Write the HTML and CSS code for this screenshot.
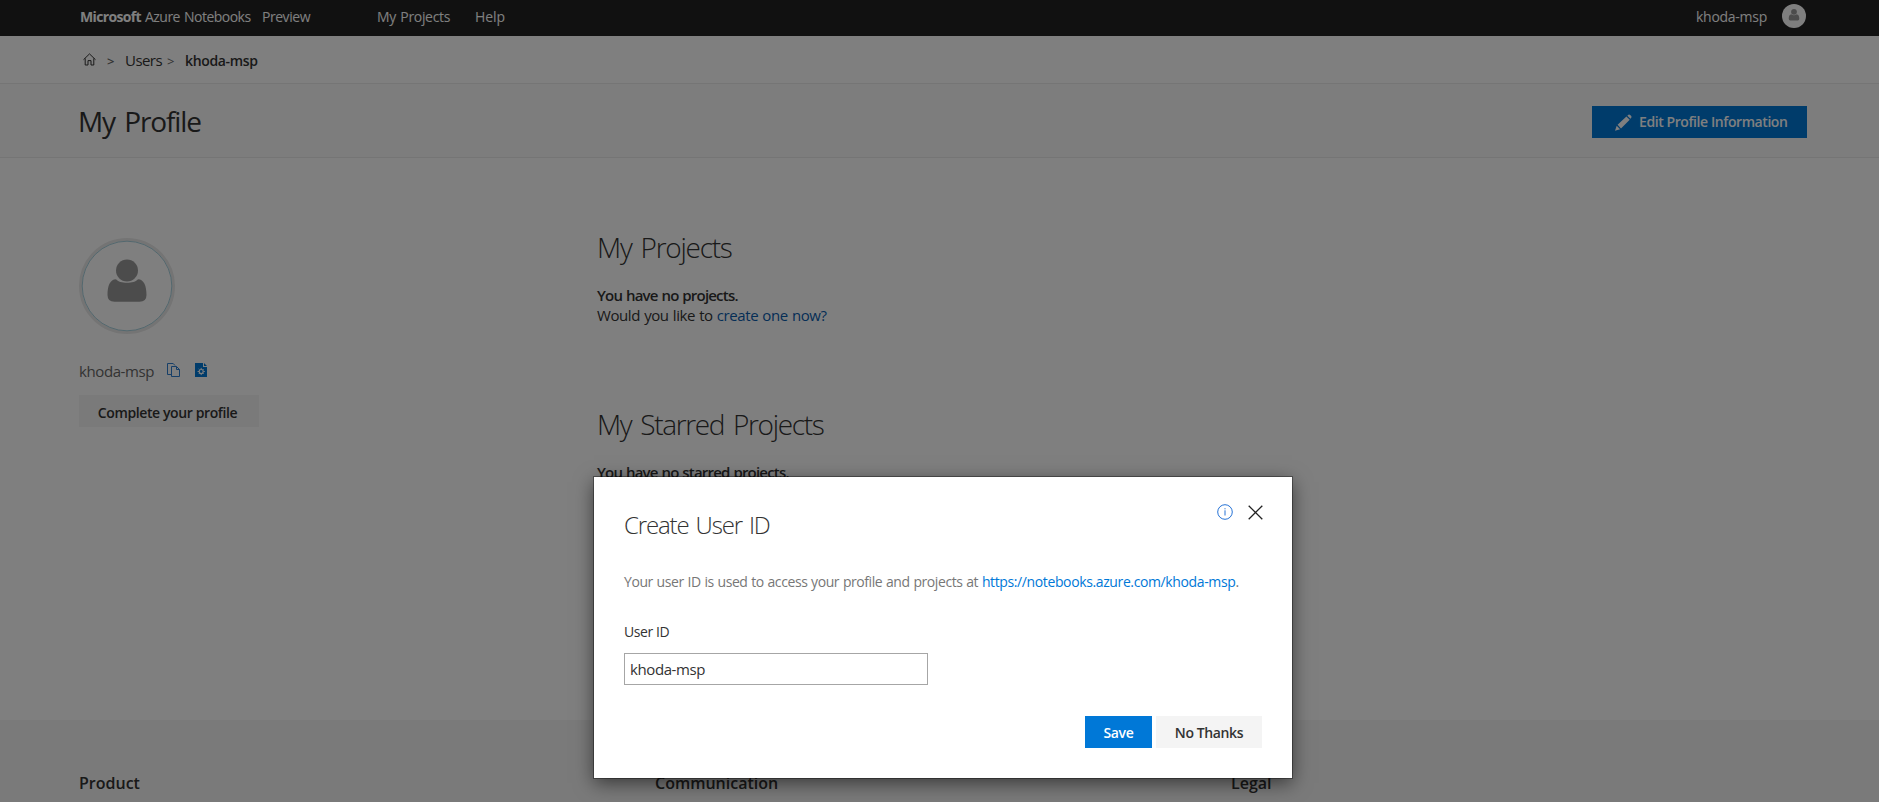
FILE: index.html
```html
<!DOCTYPE html>
<html lang="en">
<head>
<meta charset="utf-8">
<title>My Profile - Azure Notebooks</title>
<link rel="stylesheet" href="styles.css">
</head>
<body>
<div class="page">
  <nav class="topbar">
    <div class="brand"><b>Microsoft</b><span class="product">Azure Notebooks</span><span class="preview">Preview</span></div>
    <a class="nav-projects">My Projects</a>
    <a class="nav-help">Help</a>
    <span class="nav-user">khoda-msp</span>
    <svg class="nav-avatar" viewBox="0 0 24 24"><circle cx="12" cy="12" r="12" fill="#fff"/><circle cx="12" cy="7.8" r="2.9" fill="#999"/><path d="M9.3 10.2Q12 12.2 14.7 10.2Q17.3 10.6 17.3 14.8Q17.3 16.4 15.8 16.4H8.2Q6.7 16.4 6.7 14.8Q6.7 10.6 9.3 10.2Z" fill="#999"/></svg>
  </nav>
  <div class="crumbs">
    <svg class="home" viewBox="0 0 13 13" fill="none" stroke="#333"><path d="M.5 6.7L6.5.9L12.5 6.7M2.2 5.4V12H5V7.6H8V12H10.8V5.4"/></svg>
    <span class="sep first">&gt;</span>
    <a class="users">Users</a>
    <span class="sep second">&gt;</span>
    <b class="current">khoda-msp</b>
  </div>
  <header class="title-band">
    <h1>My Profile</h1>
    <button class="btn edit">
      <svg viewBox="0 0 17 17" fill="#fff"><path d="M0 16.7L1.7 11.8L5.1 15.2ZM2.6 10.7L11.4 2.5L14.7 5.7L6 14.4ZM12.3 1.7L13.4.7Q14.3 0 15.2.9L16.2 1.9Q17 2.8 16.2 3.8L15.5 4.8Z"/></svg>
      <span>Edit Profile Information</span>
    </button>
  </header>
  <main class="content">
    <aside class="profile">
      <svg class="avatar" viewBox="0 0 96 96"><circle cx="48" cy="48" r="46.5" fill="none" stroke="#e9e9e9" stroke-width="3"/><circle cx="48" cy="48" r="44.8" fill="none" stroke="#8fc4d4" stroke-width=".8"/><circle cx="48" cy="32.5" r="11" fill="#999"/><path d="M37 41.3C40.5 46 55.5 46 59 41.3C65 41.5 67.5 48 67.5 57Q67.5 63.8 60.5 63.8H35.5Q28.5 63.8 28.5 57C28.5 48 31 41.5 37 41.3Z" fill="#999"/></svg>
      <div class="identity">
        <span class="user-name">khoda-msp</span>
        <svg class="copy" viewBox="0 0 13 14" fill="none" stroke="#2f7fd0"><path d="M4 11.5H.5V.5H6.2L8 2.500M4.500 13.500V3.500H9.500L12.500 6.500V13.500ZM9.500 3.500V6.500H12.500"/></svg>
        <svg class="filecfg" viewBox="0 0 12 14"><path d="M0 0H8V4H12V14H0ZM9 0L12 3H9Z" fill="#0078d7"/><circle cx="6.2" cy="8.5" r="2" fill="none" stroke="#fff" stroke-width="1.100"/><path d="M6.2 4.9V6.3M6.2 10.7V12.1M2.6 8.500H4M8.400 8.500H9.800M3.700 6L4.600 6.900M7.800 10.100L8.700 11M3.700 11L4.600 10.100M7.800 6.900L8.700 6" stroke="#fff"/></svg>
      </div>
      <button class="btn light complete">Complete your profile</button>
    </aside>
    <section class="lists">
      <h2>My Projects</h2>
      <p class="empty">You have no projects.</p>
      <p class="hint">Would you like to <a>create one now?</a></p>
      <h2 class="starred">My Starred Projects</h2>
      <p class="empty">You have no starred projects.</p>
    </section>
  </main>
  <footer class="footer"><b>Product</b><b>Communication</b><b>Legal</b></footer>
</div>
<div class="overlay">
  <div class="dialog">
    <div class="dialog-head">
      <h3>Create User ID</h3>
      <svg class="info" viewBox="0 0 16 16" fill="none" stroke="#2673d6"><circle cx="8" cy="8" r="7.300"/><path d="M8 6.300V11.500M8 4.200V5.300"/></svg>
      <svg class="close" viewBox="0 0 15 15" fill="none" stroke="#222" stroke-width="1.300"><path d="M.7.7L14.300 14.300M14.300.7L.7 14.300"/></svg>
    </div>
    <p class="desc">Your user ID is used to access your profile and projects at <a>https://notebooks.azure.com/khoda-msp</a>.</p>
    <label for="uid">User ID</label>
    <input id="uid" type="text" value="khoda-msp">
    <div class="actions">
      <button class="btn save">Save</button>
      <button class="btn light cancel">No Thanks</button>
    </div>
  </div>
</div>
</body>
</html>
```
FILE: styles.css
```css
* { box-sizing: border-box; margin: 0; }
html, body { height: 100%; overflow: hidden; }
body { font: 14px/20px "Open Sans", "Noto Sans", sans-serif; color: #333; background: #fff; }
svg { display: block; flex: none; }
button { border: 0; font: inherit; }

.page { height: 802px; display: flex; flex-direction: column; }

.topbar { height: 36px; flex: none; display: flex; align-items: center; padding: 0 73px 3px 80px; background: #222; color: #fff; white-space: nowrap; }
.brand { width: 297px; display: flex; }
.brand b { width: 65px; letter-spacing: -.65px; }
.product { width: 117px; letter-spacing: -.53px; word-spacing: 1px; }
.preview { letter-spacing: -.46px; }
.nav-projects { width: 98px; letter-spacing: -.32px; word-spacing: 1px; }
.nav-help { letter-spacing: -.07px; }
.nav-user { margin-left: auto; letter-spacing: -.27px; }
.nav-avatar { width: 24px; height: 24px; margin: -1px 0 0 15px; }

.crumbs { height: 48px; flex: none; display: flex; align-items: center; padding: 2px 0 0 83px; border-bottom: 1px solid #eaeaea; white-space: nowrap; }
.home { width: 13px; height: 13px; margin-top: -3px; }
.sep { font-size: 13px; color: #666; }
.first { font-weight: 600; margin-left: 11px; width: 18px; }
.users { font-size: 15px; letter-spacing: -.56px; width: 42px; margin-top: -1px; }
.second { width: 18px; }
.current { font-weight: 600; letter-spacing: -.35px; }

.title-band { height: 74px; flex: none; display: flex; align-items: center; justify-content: space-between; padding: 3px 72px 0 78px; background: #fafafa; border-bottom: 1px solid #eaeaea; }
h1 { font-size: 28px; line-height: 36px; font-weight: 400; letter-spacing: -1.1px; word-spacing: 3px; margin-top: -2px; }
.btn { height: 32px; padding: 1px 0 0; font-weight: 600; line-height: 31px; text-align: center; white-space: nowrap; }
.light { background: #f4f4f4; color: #333; }
.edit { width: 215px; display: flex; padding: 0 0 0 23px; line-height: 32px; background: #0078d7; color: #fff; letter-spacing: -.42px; }
.edit svg { width: 17px; height: 17px; margin: 8px 7px 0 0; }

.content { height: 562px; flex: none; display: grid; grid-template-columns: 518px 1fr; padding: 71px 72px 0 79px; }
.profile { padding-top: 9px; }
.avatar { width: 96px; height: 96px; }
.identity { display: flex; margin-top: 27px; height: 20px; }
.user-name { width: 88px; font-size: 15px; letter-spacing: -.4px; color: #666; }
.copy { width: 13px; height: 14px; margin-top: 2px; }
.filecfg { width: 12px; height: 14px; margin: 2px 0 0 15px; }
.complete { display: block; width: 180px; margin-top: 14px; letter-spacing: -.39px; padding: 2px 3px 0 0; }
h2 { font-size: 28px; line-height: 36px; font-weight: 300; letter-spacing: -1.25px; word-spacing: 3px; margin-bottom: 20px; }
.starred { margin-top: 81px; letter-spacing: -1.35px; }
.empty { font-size: 15px; font-weight: 600; letter-spacing: -.8px; word-spacing: .7px; }
.hint { font-size: 15px; letter-spacing: -.4px; word-spacing: .6px; }
.hint a { color: #0a5cad; }

.footer { flex: 1; display: grid; grid-template-columns: 576px 576px 1fr; padding: 53px 0 0 79px; background: #f4f4f4; font-size: 16px; }
.footer b { font-weight: 600; }

.overlay { position: absolute; inset: 0; background: rgba(0, 0, 0, .5); }
.dialog { position: absolute; left: 594px; top: 477px; width: 698px; height: 301px; padding: 32px 30px 30px; background: #fff; box-shadow: 0 0 0 1px rgba(0, 0, 0, .35), 0 5px 18px rgba(0, 0, 0, .55); }
.dialog-head { display: flex; height: 32px; margin-bottom: 31px; }
h3 { flex: 1; font-size: 24px; line-height: 32px; font-weight: 300; letter-spacing: -1.15px; word-spacing: 2px; }
.info { width: 16px; height: 16px; margin: -5px -1px 0 0; }
.close { width: 15px; height: 15px; margin: -4px -1px 0 15px; }
.info { margin-right: 0; }
.desc { color: #777; letter-spacing: -.42px; word-spacing: .5px; white-space: nowrap; margin-bottom: 30px; }
.desc a { color: #0078d7; letter-spacing: -.38px; }
label { display: block; letter-spacing: -.4px; margin: 0 0 11px; }
input { display: block; width: 304px; height: 32px; padding: 0 5px; border: 1px solid #a6a6a6; font: 15px "Open Sans", sans-serif; letter-spacing: -.4px; color: #333; background: #fff; }
.actions { display: flex; justify-content: flex-end; gap: 4px; margin-top: 31px; }
.save { width: 67px; background: #0078d7; color: #fff; letter-spacing: -.3px; }
.cancel { width: 106px; letter-spacing: -.38px; }
```
